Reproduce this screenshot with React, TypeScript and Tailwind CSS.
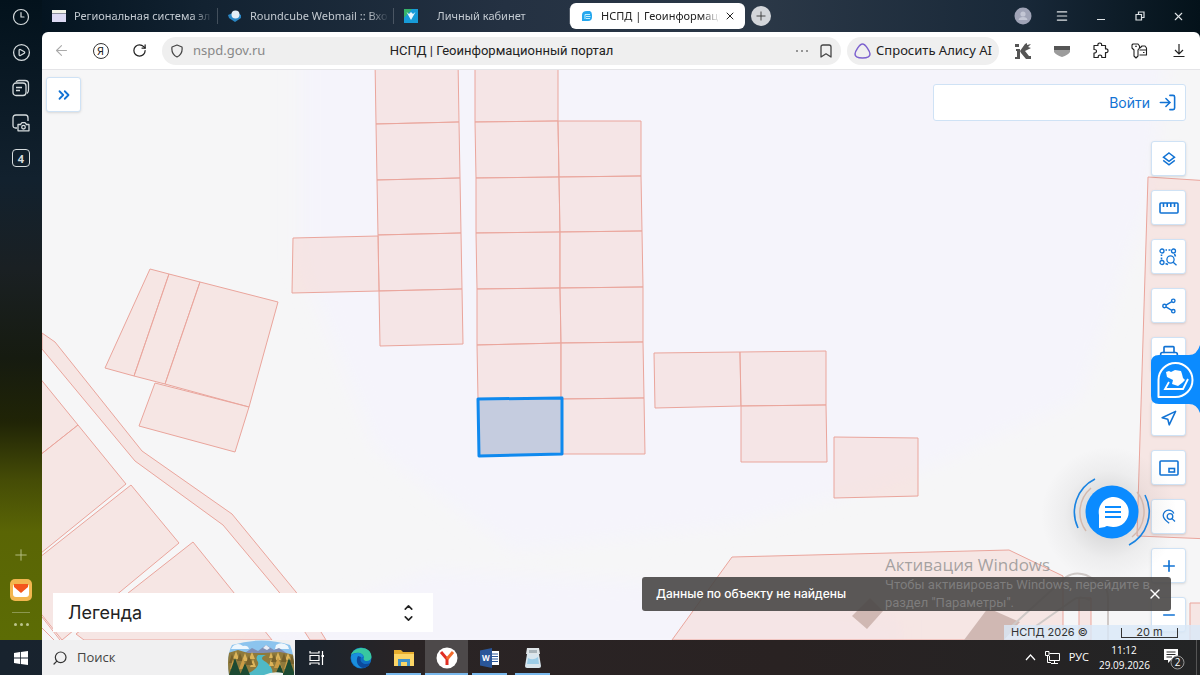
import { useState } from 'react'
import type { ReactNode } from 'react'
import clsx from 'clsx'
import {
  ArrowLeft,
  ChevronDown,
  ChevronsRight,
  ChevronUp,
  CirclePlay,
  Clock3,
  LogIn,
  Menu,
  Minus,
  Navigation,
  Plus,
  Printer,
  RotateCw,
  Search,
  X,
} from 'lucide-react'

// parcel outlines in map units
const parcels = [
  '375,60 458,60 459,122 376,124',
  '376,124 459,122 460,178 377,180',
  '377,180 460,178 461,233 378,235',
  '378,235 461,233 462,289 379,291',
  '379,291 462,289 463,344 380,346',
  '293,238 378,236 379,291 292,293',
  '475,60 558,60 558,121 475,122',
  '475,122 558,121 559,177 476,178',
  '476,178 559,177 560,232 476,233',
  '476,233 560,232 560,288 477,289',
  '477,289 560,288 561,343 477,345',
  '477,345 561,343 561,398 478,399',
  '558,121 641,121 641,176 559,177',
  '559,177 641,176 642,231 560,232',
  '560,232 642,231 643,287 560,288',
  '560,288 643,287 643,342 561,343',
  '561,343 643,342 644,398 561,399',
  '561,399 644,398 645,454 562,454',
  '654,353 740,352 741,406 655,408',
  '740,352 826,351 826,405 741,406',
  '741,406 826,405 827,462 741,462',
  '834,437 918,438 918,496 834,498',
  '150,269 169,274 134,376 105,368',
  '169,274 200,282 165,384 134,376',
  '200,282 278,302 249,407 165,384',
  '155,383 249,407 235,452 139,426',
  '42,333 55,342 142,451 232,514 296,592 326,640 310,640 279,592 223,525 135,461 42,349',
  '30,366 78,425 30,463',
  '78,425 126,484 30,562 30,463',
  '131,485 179,543 62,640 30,600 30,565',
  '193,542 272,640 84,640 76,634',
  '1148,177 1210,181 1210,539 1137,536',
  '672,640 732,557 1009,550 1063,576 1063,640',
  '1079,598 1091,598 1091,640 1079,640',
  '1190,603 1210,603 1210,650 1190,650',
]

const CadastralMap = () => (
  <svg
    className="absolute inset-0 h-full w-full"
    viewBox="42 70 1158 570"
    preserveAspectRatio="xMinYMin slice"
    role="img"
    aria-label="Кадастровая карта"
  >
    <defs>
      <filter id="soft">
        <feGaussianBlur stdDeviation="9" />
      </filter>
    </defs>
    <rect x="42" y="70" width="1158" height="570" fill="#f6f6f7" />
    <path
      d="M299 40 L299 260 L375 450 L515 552 L740 525 L905 478 L1080 400 L1150 200 L1170 40 Z M240 640 L430 570 L640 580 L900 620 L900 660 L240 660 Z"
      fill="#f5f4fb"
      filter="url(#soft)"
    />
    <g fill="#f5dcd9" fillOpacity="0.62" stroke="#eaa59c" strokeWidth="1">
      {parcels.map((points) => (
        <polygon key={points} points={points} />
      ))}
    </g>
    <path d="M42 617 L60 640 M42 628 L54 640" stroke="#eaa59c" fill="none" />
    <path d="M852 616 L870 598 L883 611 L867 629 Z M964 640 L988 608 L1020 622 L1004 640 Z" fill="#d0b8b3" />
    <path
      d="M1012 626 L1066 577 Q1075 571 1086 575 L1101 583 Q1108 588 1108 598 L1108 640 M1036 626 L1073 600 Q1079 595 1090 600"
      fill="none"
      stroke="#cfc9c7"
      strokeWidth="2"
    />
    <polygon points="478,399 562,398 562,454 479,456" fill="#c5ccdf" stroke="#0f89ee" strokeWidth="3" strokeLinejoin="round" />
  </svg>
)

const LayersIcon = () => (
  <svg width="14" height="14" viewBox="0 0 14 14" fill="none" stroke="currentColor" strokeWidth="1.5">
    <path d="M7 1 L12.5 5.2 L7 9.4 L1.5 5.2 Z M1.2 8.4 L7 12.8 L12.8 8.4" />
  </svg>
)

const RulerIcon = () => (
  <svg width="20" height="12" viewBox="0 0 20 12" fill="none" stroke="currentColor" strokeWidth="1.6">
    <rect x="1" y="1" width="18" height="10" rx="1" />
    <path d="M4.5 1 V5 M8.2 1 V5 M11.8 1 V5 M15.5 1 V5" />
  </svg>
)

const AreaSearchIcon = () => (
  <svg width="19" height="18" viewBox="0 0 19 18" fill="none" stroke="currentColor" strokeWidth="1.3">
    <circle cx="3" cy="3" r="2" />
    <circle cx="14.5" cy="3" r="2" />
    <circle cx="3" cy="14.5" r="2" />
    <path d="M6.5 2 H8 M9.5 2 H11.5 M2.5 6.5 V8 M2.5 9.5 V11.5 M15.5 6 L16.5 8.5 M6.5 15.5 L9 16.5" strokeWidth="1.6" />
    <circle cx="11.5" cy="11.5" r="3.6" />
    <path d="M14.2 14.2 L17.5 17.3" />
  </svg>
)

const ShareIcon = () => (
  <svg width="14" height="16" viewBox="0 0 14 16" fill="none" stroke="currentColor" strokeWidth="1.4">
    <circle cx="2.5" cy="8" r="1.7" />
    <circle cx="11.3" cy="2.8" r="1.7" />
    <circle cx="11.3" cy="13.2" r="1.7" />
    <path d="M4 7.1 L9.8 3.7 M4 8.9 L9.8 12.3" />
  </svg>
)

const MiniMapIcon = () => (
  <svg width="20" height="16" viewBox="0 0 20 16" fill="none" stroke="currentColor" strokeWidth="1.6">
    <rect x="1" y="1" width="18" height="14" rx="1" />
    <rect x="10" y="8.5" width="5.5" height="3.5" />
  </svg>
)

const PinSearchIcon = () => (
  <svg width="14" height="16" viewBox="0 0 14 16" fill="none" stroke="currentColor" strokeWidth="1.3">
    <path d="M7.2 14.2 C3.5 11.5 1.2 9 1.2 6.5 C1.2 3.4 3.7 1.2 6.7 1.2 C9.2 1.2 11 2.6 11.8 4.4" />
    <circle cx="8" cy="7.5" r="2.8" />
    <path d="M10 9.6 L13 12.5" />
  </svg>
)

const MapButton = ({ label, children }: { label: string; children: ReactNode }) => (
  <button
    type="button"
    aria-label={label}
    className="flex size-[35px] shrink-0 items-center justify-center rounded-[3px] border border-[#cfe2f5] bg-white text-[#1273d4] shadow-sm"
  >
    {children}
  </button>
)

const MapTools = () => (
  <div className="absolute top-[71px] right-[14px] flex flex-col gap-[29px]">
    <div className="flex flex-col gap-[14px]">
      <MapButton label="Слои"><LayersIcon /></MapButton>
      <MapButton label="Измерения"><RulerIcon /></MapButton>
      <MapButton label="Поиск по области"><AreaSearchIcon /></MapButton>
      <MapButton label="Поделиться"><ShareIcon /></MapButton>
      <MapButton label="Печать"><Printer size={20} /></MapButton>
    </div>
    <div className="flex flex-col gap-[14px]">
      <MapButton label="Моё местоположение"><Navigation size={17} strokeWidth={2.2} /></MapButton>
      <MapButton label="Обзорная карта"><MiniMapIcon /></MapButton>
      <MapButton label="Поиск по точке"><PinSearchIcon /></MapButton>
      <MapButton label="Приблизить"><Plus size={18} strokeWidth={2.2} /></MapButton>
      <MapButton label="Отдалить"><Minus size={18} strokeWidth={2.2} /></MapButton>
    </div>
  </div>
)

const SideTab = () => (
  <button type="button" aria-label="Помощник" className="absolute top-[272px] right-0 text-white">
    <svg width="49" height="76" viewBox="0 0 49 76">
      <path d="M49 3 Q46 13 38 13 H8 Q0 13 0 21 V54 Q0 62 8 62 H38 Q46 62 49 71 Z" fill="#0b8bff" />
      <path d="M7.5 55 V38 A17 17 0 1 1 24.5 55 Z" fill="none" stroke="#fff" strokeWidth="2" strokeLinejoin="round" />
      <path d="M15 30 L18 29 L20 30 L24 28 L30 29 L31 32 L32 36 L34 38 L31 41 L27 44 L21 42 L22 38 L16 35 Z" fill="#fff" />
      <path d="M18 40 L14 47 H32 L37 37" fill="none" stroke="#fff" strokeWidth="1.8" />
    </svg>
  </button>
)

const ChatButton = () => (
  <button type="button" aria-label="Чат" className="absolute top-[402px] right-[48px]">
    <svg width="80" height="80" viewBox="0 0 80 80" fill="none" className="overflow-visible">
      <defs>
        <radialGradient id="halo">
          <stop offset="0.3" stopColor="#777" stopOpacity="0.22" />
          <stop offset="0.65" stopColor="#777" stopOpacity="0.07" />
          <stop offset="1" stopColor="#777" stopOpacity="0" />
        </radialGradient>
      </defs>
      <circle cx="37" cy="43" r="68" fill="url(#halo)" />
      <circle cx="40" cy="40" r="26.5" fill="#0b8bff" />
      <path d="M27 56 V43 A15 15 0 1 1 41 55 C37 55 35 53 33 55 Z" fill="#fff" />
      <path d="M33 35 H49 M33 40 H49 M33 45 H49" stroke="#0b8bff" strokeWidth="2" />
      <path d="M23 7 A37 37 0 0 0 6 56" stroke="#1a84e2" strokeWidth="1.6" />
      <path d="M73 23 A37 37 0 0 1 57 73" stroke="#1a84e2" strokeWidth="1.6" />
      <path d="M19 16 A32 32 0 0 0 14 59 M65 20 A32 32 0 0 1 60 65" stroke="#d3b9ae" strokeWidth="1.5" />
    </svg>
  </button>
)

const Toast = ({ onClose }: { onClose: () => void }) => (
  <div
    role="status"
    className="absolute right-[29px] bottom-[29px] flex h-[34px] w-[529px] items-center justify-between rounded-[3px] bg-[#494746]/90 pr-2 pl-[14px] text-[12px] font-medium text-white"
  >
    Данные по объекту не найдены
    <button type="button" aria-label="Закрыть" onClick={onClose}>
      <X size={16} />
    </button>
  </div>
)

const Portal = () => {
  const [toast, setToast] = useState(true)

  return (
    <main className="relative flex-1 overflow-hidden font-['Inter','Noto_Sans',sans-serif]">
      <CadastralMap />
      <div className="absolute top-[7px] left-1">
        <MapButton label="Развернуть панель"><ChevronsRight size={18} strokeWidth={2.4} /></MapButton>
      </div>
      <div className="absolute top-[14px] right-[14px] flex h-[37px] w-[253px] items-center justify-end rounded-[3px] border border-[#cfe2f5] bg-white pr-2">
        <a href="#login" className="flex items-center gap-2 text-[14px] text-[#1273d4]">
          Войти
          <LogIn size={19} strokeWidth={2} />
        </a>
      </div>
      <MapTools />
      <SideTab />
      <ChatButton />
      <button
        type="button"
        className="absolute bottom-2 left-[11px] flex h-[39px] w-[380px] items-center justify-between bg-white pr-[18px] pl-[15px] text-[18px] text-[#222]"
      >
        Легенда
        <span className="flex flex-col">
          <ChevronUp size={13} strokeWidth={3} className="-mb-px" />
          <ChevronDown size={13} strokeWidth={3} className="-mt-px" />
        </span>
      </button>
      <div className="absolute right-0 bottom-0 flex h-[15px] w-[196px] items-center justify-between bg-[#d9e8f8]/80 pr-[22px] pl-[7px] text-[11px] text-[#333]">
        <span>НСПД 2026 ©</span>
        <span className="h-[10px] w-[57px] border-x border-b border-[#333] text-center leading-[8px]">20 m</span>
      </div>
      {toast && <Toast onClose={() => setToast(false)} />}
      <div className="pointer-events-none absolute right-[25px] bottom-[28px] w-[290px] text-[#8a8a8a]/75">
        <p className="font-['Open_Sans','Noto_Sans',sans-serif] text-[17px] leading-[22px]">Активация Windows</p>
        <p className="font-['Roboto','Noto_Sans',sans-serif] text-[13px] leading-[18px]">
          Чтобы активировать Windows, перейдите в<br />
          раздел "Параметры".
        </p>
      </div>
    </main>
  )
}

const tabs = [
  {
    title: 'Региональная система эл',
    textClass: '',
    icon: (
      <svg width="14" height="12" viewBox="0 0 14 12">
        <rect width="14" height="12" fill="#dcd9f3" />
        <rect width="14" height="3" fill="#f2f3e8" />
        <path d="M0 3.5 H14" stroke="#8b8f9c" />
      </svg>
    ),
  },
  {
    title: 'Roundcube Webmail :: Вхо',
    textClass: '',
    icon: (
      <svg width="14" height="12" viewBox="0 0 14 12">
        <path d="M0 5 L7 2 L13 5 V8 L7 12 L1 8 Z" fill="#2a86c4" />
        <circle cx="7.5" cy="4.5" r="4" fill="#e3eef6" />
      </svg>
    ),
  },
  {
    title: 'Личный кабинет',
    textClass: 'pl-[11px]',
    icon: (
      <svg width="14" height="14" viewBox="0 0 14 14">
        <rect width="14" height="14" fill="#179bd8" />
        <path d="M0 0 H8 L0 9 Z" fill="#35b36a" />
        <path d="M2.5 3 L7 11 L11.5 3 L9 5 L7 3 L5 5 Z" fill="#e9f7ff" />
      </svg>
    ),
  },
]

const TabBar = () => (
  <header className="flex h-8 shrink-0 items-center text-[11px] text-[#c3cad1]">
    {tabs.map((tab) => (
      <button
        key={tab.title}
        type="button"
        className="flex h-4 w-[176px] shrink-0 items-center gap-2 border-r border-white/20 pr-1 pl-[10px] last-of-type:border-r-0"
      >
        <span className="shrink-0">{tab.icon}</span>
        <span
          className={clsx(
            'flex-1 overflow-hidden text-left whitespace-nowrap [mask-image:linear-gradient(to_right,black_85%,transparent)]',
            tab.textClass,
          )}
        >
          {tab.title}
        </span>
      </button>
    ))}
    <div className="flex h-[26px] w-[175px] shrink-0 items-center rounded-md bg-white pr-[9px] pl-[11px] text-[#222]">
      <svg width="12" height="12" viewBox="0 0 12 12" className="mr-[8px] shrink-0">
        <path d="M1 11 V5 Q1 1 6 1 H9 Q11 2 11 5 V7 Q11 11 7 11 Z" fill="#25a7ee" />
        <path d="M4 9 V4.5 H9 M5 6.5 H9.5 M5 8.5 H9" stroke="#bff0ff" fill="none" />
      </svg>
      <span className="flex-1 overflow-hidden whitespace-nowrap [mask-image:linear-gradient(to_right,black_85%,transparent)]">
        НСПД | Геоинформаци
      </span>
      <button type="button" aria-label="Закрыть вкладку" className="ml-1">
        <X size={12} strokeWidth={2} />
      </button>
    </div>
    <button
      type="button"
      aria-label="Новая вкладка"
      className="ml-[6px] flex size-5 shrink-0 items-center justify-center rounded-full bg-[#d3d6da] text-[#333]"
    >
      <Plus size={14} strokeWidth={1.5} />
    </button>
    <div className="ml-auto flex pr-[2px] text-[#dfe3e6] *:flex *:h-6 *:w-[39px] *:items-center *:justify-center">
      <button type="button" aria-label="Профиль">
        <svg width="18" height="18" viewBox="0 0 18 18">
          <circle cx="9" cy="9" r="8.5" fill="#9fa3b6" />
          <circle cx="9" cy="7" r="2.6" fill="#c3c6d4" />
          <path d="M4.5 13 Q5 10 9 10 Q13 10 13.5 13 Z" fill="#c3c6d4" />
        </svg>
      </button>
      <button type="button" aria-label="Меню"><Menu size={14} strokeWidth={2} /></button>
      <button type="button" aria-label="Свернуть">
        <svg width="10" height="10" viewBox="0 0 10 10" stroke="currentColor"><path d="M1 8.5 H9" /></svg>
      </button>
      <button type="button" aria-label="Восстановить">
        <svg width="10" height="10" viewBox="0 0 10 10" fill="none" stroke="currentColor" strokeWidth="1.2">
          <path d="M3.5 3 V1 H9 V6.5 H7 M1 3.5 H6.5 V9 H1 Z" />
        </svg>
      </button>
      <button type="button" aria-label="Закрыть"><X size={13} strokeWidth={2} /></button>
    </div>
  </header>
)

const Toolbar = () => (
  <div className="flex h-[38px] shrink-0 items-center border-b border-[#e4e4e7] bg-white text-[#222]">
    <div className="flex *:flex *:h-7 *:w-[39px] *:items-center *:justify-center">
      <button type="button" aria-label="Назад" className="text-[#aaa]"><ArrowLeft size={17} strokeWidth={1.5} /></button>
      <button type="button" aria-label="Яндекс">
        <span className="flex size-4 items-center justify-center rounded-full border border-[#333] text-[11px] leading-none">Я</span>
      </button>
      <button type="button" aria-label="Обновить"><RotateCw size={15} strokeWidth={2} /></button>
    </div>
    <div className="ml-[3px] grid h-7 flex-1 grid-cols-[1fr_auto_1fr] items-center rounded-full bg-[#efefef] px-[9px] text-[13px]">
      <label className="flex items-center gap-[10px] text-[#888]">
        <svg width="12" height="14" viewBox="0 0 12 14" fill="none" stroke="#444" strokeWidth="1.2">
          <path d="M6 1 L11 3 Q12 10 6 13 Q0 10 1 3 Z" strokeLinejoin="round" />
        </svg>
        <input aria-label="Адрес" defaultValue="nspd.gov.ru" className="w-24 bg-transparent outline-none" />
      </label>
      <span className="font-['Roboto','Noto_Sans',sans-serif]">НСПД | Геоинформационный портал</span>
      <span className="flex items-center justify-end gap-[12px]">
        <button type="button" aria-label="Ещё" className="flex gap-[3px] *:size-[2px] *:rounded-full *:bg-[#777]">
          <i /><i /><i />
        </button>
        <button type="button" aria-label="В закладки" className="text-[#444]">
          <svg width="12" height="14" viewBox="0 0 12 14" fill="none" stroke="currentColor" strokeWidth="1.3" strokeLinejoin="round">
            <path d="M1 3 Q1 1 3 1 H9 Q11 1 11 3 V13 L6 9.8 L1 13 Z" />
          </svg>
        </button>
      </span>
    </div>
    <button type="button" className="ml-[6px] flex h-7 w-[152px] items-center justify-center gap-[5px] rounded-full bg-[#efefef] text-[13px] whitespace-nowrap">
      <svg width="17" height="16" viewBox="0 0 17 16" fill="none" stroke="#7d62cf" strokeWidth="1.5">
        <path d="M8.5 1 C11.5 1 16 8.5 16 11 C16 14 12 15 8.5 15 C5 15 1 14 1 11 C1 8.5 5.5 1 8.5 1 Z" />
      </svg>
      Спросить Алису AI
    </button>
    <div className="ml-1 flex pr-[2px] *:flex *:h-7 *:w-[39px] *:items-center *:justify-center">
      <button type="button" aria-label="Расширение K">
        <svg width="16" height="16" viewBox="0 0 16 16" fill="#555">
          <path d="M0 1 H4 V4 H0 Z M1 6 H5 V16 H0 V14 H2 V8 H1 Z M5 8 L10 1 L12 0 L12 2 L16 1 L13 4 L16 5 L10 8 L14 13 H16 V16 H11 L6 10 Z" />
        </svg>
      </button>
      <button type="button" aria-label="Сохранённое">
        <svg width="16" height="12" viewBox="0 0 16 12">
          <path d="M0 1 H16 V5 H0 Z" fill="#555" />
          <path d="M0 5 H16 V7 Q14 10 8 12 Q2 10 0 7 Z" fill="#9c9c9c" />
        </svg>
      </button>
      <button type="button" aria-label="Расширения">
        <svg width="17" height="17" viewBox="0 0 17 17" fill="none" stroke="currentColor" strokeWidth="1.2" strokeLinejoin="round">
          <path d="M2 3.5 H6 Q5.5 1 7.8 1 Q10 1 9.6 3.5 H13.5 V7 Q16 6.5 16 8.8 Q16 11 13.5 10.6 V15.5 H9.8 Q10 13 8 13 Q6 13 6.2 15.5 H2 V11 Q4.5 11 4.5 9.2 Q4.5 7.4 2 7.5 Z" />
        </svg>
      </button>
      <button type="button" aria-label="Пароли">
        <svg width="17" height="16" viewBox="0 0 17 16" fill="none" stroke="currentColor" strokeWidth="1.1" strokeLinejoin="round">
          <path d="M3 7 L1 5 V2 L2 1 H7 L8.5 3 V5 L7 7 V13 L5 15 L3 13 Z M4 3.2 H6" />
          <path d="M9 5 L11 3 H14 L15.5 5 V12 H8.5 M8.5 7 H15.5 M12 9.5 H13.5" />
        </svg>
      </button>
      <button type="button" aria-label="Загрузки">
        <svg width="12" height="15" viewBox="0 0 12 15" fill="none" stroke="currentColor" strokeWidth="1.2">
          <path d="M6 1 V11 M2 7 L6 11 L10 7 M0.5 13.5 H11.5" />
        </svg>
      </button>
    </div>
  </div>
)

const Sidebar = () => (
  <nav className="flex w-[42px] shrink-0 flex-col items-center justify-between bg-[linear-gradient(#03121c_0%,#12212e_28%,#1a2023_42%,#161b10_56%,#202406_66%,#454c06_75%,#5a6505_83%,#5c6c05_100%)] pt-2 pb-[14px] text-[#d5dbdd]">
    <div className="flex flex-col items-center gap-[17px]">
      <button type="button" aria-label="История"><Clock3 size={18} strokeWidth={1.6} /></button>
      <button type="button" aria-label="Видео"><CirclePlay size={19} strokeWidth={1.6} /></button>
      <button type="button" aria-label="Коллекции">
        <svg width="18" height="18" viewBox="0 0 18 18" fill="none" stroke="currentColor" strokeWidth="1.3">
          <rect x="1" y="4" width="13" height="12.5" rx="3" />
          <path d="M4 8.5 H10 M4 11.5 H8 M4 3 Q5 1.5 7 1.5 H13 Q16.5 1.5 16.5 5 V11 Q16.5 13.5 15 14.5" />
        </svg>
      </button>
      <button type="button" aria-label="Скриншот">
        <svg width="18" height="18" viewBox="0 0 18 18" fill="none" stroke="currentColor" strokeWidth="1.3">
          <path d="M5 14 H3.5 Q1 14 1 11.5 V4 Q1 1 4 1 H13.5 Q16 1 16 4 V7" />
          <path d="M6 10.5 H8.5 L10 8.7 H13 L14.5 10.5 H17 V16.8 H6 Z" strokeLinejoin="round" />
          <circle cx="11.5" cy="13.2" r="1.8" />
        </svg>
      </button>
      <button
        type="button"
        aria-label="Открытые вкладки"
        className="flex size-[18px] items-center justify-center rounded-[4px] border border-current text-[11px] leading-none font-bold"
      >
        4
      </button>
    </div>
    <div className="flex flex-col items-center">
      <button type="button" aria-label="Добавить" className="mb-[15px] text-[#bcc58d]"><Plus size={18} strokeWidth={1.2} /></button>
      <button type="button" aria-label="Почта" className="mb-[11px]">
        <svg width="22" height="22" viewBox="0 0 22 22">
          <rect width="22" height="22" rx="5" fill="#f3b64f" />
          <rect x="3" y="5" width="16" height="13" rx="3" fill="#fff" />
          <path d="M4 5 H18 V8 L11 14 L4 8 Z" fill="#f4561c" />
        </svg>
      </button>
      <hr className="mb-[10px] w-[18px] border-[#8c9850]" />
      <button type="button" aria-label="Ещё" className="flex gap-[3px] *:size-[3px] *:rounded-full *:bg-[#bcc58d]">
        <i /><i /><i />
      </button>
    </div>
  </nav>
)

const taskbarApps = [
  {
    name: 'Microsoft Edge',
    running: false,
    active: false,
    icon: (
      <svg width="22" height="22" viewBox="0 0 22 22">
        <circle cx="11" cy="11" r="10.5" fill="#0f70c4" />
        <path d="M1 8 C4 -1 21 -2 21.5 10 C21 15 14 15 13.5 12 C16 7 7 3 1 8 Z" fill="#38c8a0" />
        <path d="M1 9 C6 4 13 6 13 10 C9 10 9 16 14 18 C17 19 19 17 20 16 C16 24 1 23 1 9 Z" fill="#1a8fdd" />
        <path d="M8 9 C5 14 8 21 14 21 C18 20 19 18 20 16 C14 19 9 15 11 10 Z" fill="#0c4a9c" />
      </svg>
    ),
  },
  {
    name: 'Проводник',
    running: true,
    active: false,
    icon: (
      <svg width="20" height="18" viewBox="0 0 20 18">
        <path d="M0 1 H7 L9 3 H20 V17 H0 Z" fill="#e6ad2e" />
        <path d="M0 5 H20 V17 H0 Z" fill="#fbd566" />
        <path d="M4 17 V10 H16 V17 H13 V13 H7 V17 Z" fill="#4193c9" />
      </svg>
    ),
  },
  {
    name: 'Яндекс Браузер',
    running: true,
    active: true,
    icon: (
      <svg width="22" height="22" viewBox="0 0 22 22">
        <circle cx="11" cy="11" r="10.5" fill="#fff" />
        <path d="M5 5 L11 12 V18" stroke="#e02f24" strokeWidth="3" fill="none" />
        <path d="M17 5 L11 12" stroke="#f26a2b" strokeWidth="3" />
      </svg>
    ),
  },
  {
    name: 'Word',
    running: true,
    active: false,
    icon: (
      <svg width="20" height="20" viewBox="0 0 20 20">
        <rect x="9" y="3" width="10" height="14" fill="#fff" />
        <path d="M11 6 H18 M11 8.5 H18 M11 11 H18 M11 13.5 H18" stroke="#2a5699" />
        <path d="M0 2.5 L12 0 V20 L0 17.5 Z" fill="#2a5699" />
        <text x="2" y="13" fontSize="8" fontWeight="bold" fill="#fff">W</text>
      </svg>
    ),
  },
  {
    name: 'Сканер',
    running: true,
    active: false,
    icon: (
      <svg width="18" height="22" viewBox="0 0 18 22">
        <path d="M3 1 H15 L16 7 H2 Z" fill="#dfe5e8" />
        <path d="M5 3 H13 V6 H5 Z" fill="#a9b4ba" />
        <path d="M3 7 H15 L17 19 Q17 21 15 21 H3 Q1 21 1 19 Z" fill="#d9e6ee" />
        <path d="M4 11 Q9 14 14 10 L15 17 H3 Z" fill="#9ccde8" />
      </svg>
    ),
  },
]

const Landscape = () => (
  <svg width="67" height="35" viewBox="0 0 67 35">
    <defs>
      <clipPath id="scene">
        <path d="M4 5 Q34 -4 62 5 Q67 16 66 35 H1 Q-2 16 4 5 Z" />
      </clipPath>
    </defs>
    <g clipPath="url(#scene)">
      <rect width="67" height="35" fill="#8cc4ee" />
      <path d="M5 6 Q10 2 15 6 Q20 5 21 9 H3 Z M48 5 Q54 1 60 6 L61 9 H47 Z" fill="#eef7fd" />
      <path d="M14 15 L24 8 L30 11 L38 5 L46 10 L51 8 L63 16 Z" fill="#7f8db4" />
      <path d="M35 8 L38 5 L42 8 L39 10 Z" fill="#e8edf6" />
      <path d="M0 13 L10 10 L20 13 L35 13 L52 12 L67 15 V35 H0 Z" fill="#8f7a3c" />
      <path d="M30 15 H38 Q30 18 38 22 Q46 28 44 35 H17 Q32 28 30 22 Q27 18 30 15 Z" fill="#4fb9c6" />
      <path d="M8 11 L11 19 H5 Z M17 13 L20 21 H14 Z M50 12 L53 20 H47 Z M24 12 L27 19 H21 Z M60 13 L63 20 H57 Z M43 12 L45 18 H41 Z M25 19 L28 27 H22 Z M43 19 L46 26 H41 Z" fill="#dcb45a" />
      <path d="M12 13 L15 21 H9 Z M21 16 L25 25 H17 Z M46 14 L49 22 H43 Z M56 13 L59 22 H53 Z M4 14 L7 23 H1 Z M64 15 L67 24 H61 Z" fill="#75602b" />
      <path d="M15 18 L19 29 H11 Z M50 17 L54 28 H46 Z M5 19 L8 29 H2 Z M59 19 L62 29 H56 Z" fill="#c99b45" />
      <path d="M7 18 L13 35 H1 Z M17 23 L22 35 H12 Z M61 18 L67 35 H55 Z M52 24 L56 35 H47 Z" fill="#1c4a32" />
      <path d="M36 35 Q45 31 55 33 V35 Z" fill="#eef3f0" />
    </g>
  </svg>
)

const Taskbar = () => (
  <footer className="flex h-[35px] shrink-0 bg-[linear-gradient(to_right,#18232e_0%,#1c242d_26%,#2a2425_34%,#292222_65%,#232425_100%)] font-['Open_Sans','Noto_Sans',sans-serif] text-white">
    <button type="button" aria-label="Пуск" className="flex w-[42px] items-center justify-center">
      <svg width="14" height="14" viewBox="0 0 14 14" fill="#fff">
        <path d="M0 2 L6 1.1 V6.6 H0 Z M6.8 1 L14 0 V6.6 H6.8 Z M0 7.4 H6 V12.9 L0 12 Z M6.8 7.4 H14 V14 L6.8 13 Z" />
      </svg>
    </button>
    <label className="flex w-[253px] items-center bg-[#f0f0f1] pl-[10px] text-[#333]">
      <Search size={16} strokeWidth={1.8} className="shrink-0 -scale-x-100" />
      <input
        type="search"
        aria-label="Поиск"
        placeholder="Поиск"
        className="ml-[9px] w-0 flex-1 bg-transparent text-[13px] outline-none placeholder:text-[#444]"
      />
      <Landscape />
    </label>
    <button type="button" aria-label="Представление задач" className="flex w-[44px] items-center justify-center">
      <svg width="16" height="14" viewBox="0 0 16 14" fill="none" stroke="#fff" strokeWidth="1.2">
        <path d="M1 0 V2 H10 V0 M1 14 V12 H10 V14 M1 4.5 H10 V9.5 H1 Z M13.5 0 V14" />
        <path d="M12.5 4 H15 V6 H12.5 Z" fill="#fff" stroke="none" />
      </svg>
    </button>
    {taskbarApps.map((app) => (
      <button
        key={app.name}
        type="button"
        aria-label={app.name}
        className={clsx('relative flex w-[43px] items-center justify-center', app.active && 'bg-[#4d494a]')}
      >
        {app.icon}
        {app.running && (
          <span className={clsx('absolute bottom-0 h-[2px] bg-[#79b8ec]', app.active ? 'inset-x-0' : 'inset-x-1')} />
        )}
      </button>
    ))}
    <div className="ml-auto flex items-center">
      <button type="button" aria-label="Скрытые значки" className="mr-[9px]">
        <svg width="11" height="7" viewBox="0 0 11 7" fill="none" stroke="#fff" strokeWidth="1.2"><path d="M1 6 L5.5 1 L10 6" /></svg>
      </button>
      <button type="button" aria-label="Сеть" className="mr-[9px]">
        <svg width="15" height="13" viewBox="0 0 15 13" fill="none" stroke="#fff">
          <path d="M4.5 2.5 H14.5 V9.5 H4.5 V5 M9.5 9.5 V12 M6 12.5 H13 M0.5 0.5 H4 V4.5 H0.5 Z M2.5 5 V11.5 H6" />
        </svg>
      </button>
      <button type="button" className="mr-[10px] text-[11px]">РУС</button>
      <div className="mr-[14px] w-[50px] text-center text-[10px] leading-[15px] whitespace-nowrap">
        <div>11:12</div>
        <div>29.09.2026</div>
      </div>
      <button type="button" aria-label="Уведомления" className="mr-[11px]">
        <svg width="22" height="24" viewBox="0 0 22 24">
          <path d="M1 3 H15 V14 H8 L5 17 V14 H1 Z" fill="#fff" />
          <path d="M3.5 6 H12.5 M3.5 8.5 H12.5 M3.5 11 H9" stroke="#2a2a2a" />
          <circle cx="14.5" cy="16.5" r="6.5" fill="#2a2a2a" stroke="#999" />
          <text x="14.5" y="20" textAnchor="middle" fontSize="10" fill="#fff">2</text>
        </svg>
      </button>
      <span className="mr-[3px] h-[35px] w-px bg-[#555]" />
    </div>
  </footer>
)

export default function App() {
  return (
    <div className="flex h-screen flex-col overflow-hidden font-['Noto_Sans','Open_Sans',sans-serif]">
      <div className="flex min-h-0 flex-1">
        <Sidebar />
        <div className="flex min-w-0 flex-1 flex-col bg-[linear-gradient(to_right,#041420_0%,#122231_14%,#243142_40%,#2b3847_62%,#182838_85%,#04121a_100%)]">
          <TabBar />
          <div className="flex flex-1 flex-col overflow-hidden rounded-t-md">
            <Toolbar />
            <Portal />
          </div>
        </div>
      </div>
      <Taskbar />
    </div>
  )
}
